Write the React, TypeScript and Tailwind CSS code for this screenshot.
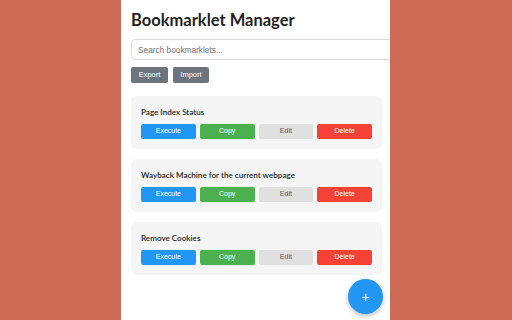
import { useState } from "react";

interface Bookmarklet {
  name: string;
}

const bookmarklets: Bookmarklet[] = [
  { name: "Page Index Status" },
  { name: "Wayback Machine for the current webpage" },
  { name: "Remove Cookies" },
];

export default function App() {
  const [query, setQuery] = useState("");

  return (
    <div className="w-[512px] h-[320px] bg-[#cf6a57] overflow-hidden">
      <div className="relative ml-[121px] w-[269px] h-[320px] bg-white overflow-hidden px-[10px] font-['Liberation_Sans',Arial,sans-serif]">
        {/* Header */}
        <h1 className="pt-[8px] text-[16.5px] leading-[24px] font-bold text-[#1f1f1f] font-['Lato',sans-serif]">
          Bookmarklet Manager
        </h1>

        <input
          value={query}
          onChange={(e) => setQuery(e.target.value)}
          placeholder="Search bookmarklets..."
          className="mt-[7px] block w-[280px] h-[21px] px-[6px] rounded-[4px] border border-[#dcdcdc] text-[8.3px] text-[#333] placeholder:text-[#6f6f6f] outline-none"
        />

        <div className="mt-[7px] flex gap-[5px]">
          <button className="w-[37px] h-[16px] rounded-[2px] bg-[#6c757d] text-white text-[7.5px]">
            Export
          </button>
          <button className="w-[36px] h-[16px] rounded-[2px] bg-[#6c757d] text-white text-[7.5px]">
            Import
          </button>
        </div>

        {/* Bookmarklet list */}
        <div className="mt-[13px] flex flex-col gap-[10px] w-[251px]">
          {bookmarklets.map((b) => (
            <div key={b.name} className="rounded-[6px] bg-[#f5f5f5] px-[10px] pt-[10px] pb-[10px]">
              <div className="h-[12px] leading-[12px] text-[8.1px] font-semibold text-[#222] font-['Lato',sans-serif]">
                {b.name}
              </div>
              <div className="mt-[6px] grid grid-cols-4 gap-[4px]">
                <button className="h-[15px] rounded-[2px] bg-[#2196f3] text-white text-[7px]">Execute</button>
                <button className="h-[15px] rounded-[2px] bg-[#4caf50] text-white text-[7px]">Copy</button>
                <button className="h-[15px] rounded-[2px] bg-[#e0e0e0] text-[#5a5a5a] text-[7px]">Edit</button>
                <button className="h-[15px] rounded-[2px] bg-[#f44336] text-white text-[7px]">Delete</button>
              </div>
            </div>
          ))}
        </div>

        {/* Add button */}
        <button className="absolute left-[227px] top-[279px] w-[35px] h-[35px] rounded-full bg-[#2196f3] text-white text-[14px] leading-none shadow-[0_2px_5px_rgba(0,0,0,0.25)] flex items-center justify-center">
          +
        </button>
      </div>
    </div>
  );
}
